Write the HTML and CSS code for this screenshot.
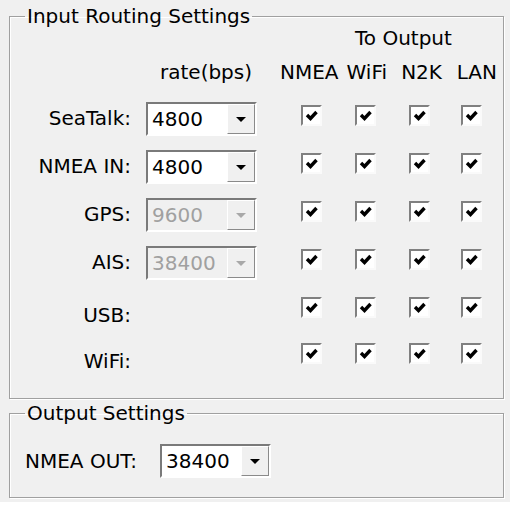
FILE: index.html
```html
<!DOCTYPE html>
<html lang="en">
<head>
    <meta charset="UTF-8">
    <title>Routing Settings</title>
    <link rel="stylesheet" href="styles.css">
</head>
<body>
    <div class="panel">
        <!-- Input routing frame -->
        <fieldset class="frame">
            <legend>Input Routing Settings</legend>
            <div class="routing">
                <div class="to-output">To Output</div>

                <div class="rate-head">rate(bps)</div>
                <div class="out-heads">
                    <span class="h-nmea">NMEA</span>
                    <span class="h-wifi">WiFi</span>
                    <span class="h-n2k">N2K</span>
                    <span>LAN</span>
                </div>

                <div class="label">SeaTalk:</div>
                <div class="combo"><span class="value">4800</span><span class="drop"><span class="arrow"></span></span></div>
                <span class="cb c1"><svg viewBox="0 0 17 17"><path d="M4 8 L7.5 11.5 L13.5 5"/></svg></span>
                <span class="cb c2"><svg viewBox="0 0 17 17"><path d="M4 8 L7.5 11.5 L13.5 5"/></svg></span>
                <span class="cb c3"><svg viewBox="0 0 17 17"><path d="M4 8 L7.5 11.5 L13.5 5"/></svg></span>
                <span class="cb c4"><svg viewBox="0 0 17 17"><path d="M4 8 L7.5 11.5 L13.5 5"/></svg></span>

                <div class="label">NMEA IN:</div>
                <div class="combo"><span class="value">4800</span><span class="drop"><span class="arrow"></span></span></div>
                <span class="cb c1"><svg viewBox="0 0 17 17"><path d="M4 8 L7.5 11.5 L13.5 5"/></svg></span>
                <span class="cb c2"><svg viewBox="0 0 17 17"><path d="M4 8 L7.5 11.5 L13.5 5"/></svg></span>
                <span class="cb c3"><svg viewBox="0 0 17 17"><path d="M4 8 L7.5 11.5 L13.5 5"/></svg></span>
                <span class="cb c4"><svg viewBox="0 0 17 17"><path d="M4 8 L7.5 11.5 L13.5 5"/></svg></span>

                <div class="label">GPS:</div>
                <div class="combo disabled"><span class="value">9600</span><span class="drop"><span class="arrow"></span></span></div>
                <span class="cb c1"><svg viewBox="0 0 17 17"><path d="M4 8 L7.5 11.5 L13.5 5"/></svg></span>
                <span class="cb c2"><svg viewBox="0 0 17 17"><path d="M4 8 L7.5 11.5 L13.5 5"/></svg></span>
                <span class="cb c3"><svg viewBox="0 0 17 17"><path d="M4 8 L7.5 11.5 L13.5 5"/></svg></span>
                <span class="cb c4"><svg viewBox="0 0 17 17"><path d="M4 8 L7.5 11.5 L13.5 5"/></svg></span>

                <div class="label">AIS:</div>
                <div class="combo disabled"><span class="value">38400</span><span class="drop"><span class="arrow"></span></span></div>
                <span class="cb c1"><svg viewBox="0 0 17 17"><path d="M4 8 L7.5 11.5 L13.5 5"/></svg></span>
                <span class="cb c2"><svg viewBox="0 0 17 17"><path d="M4 8 L7.5 11.5 L13.5 5"/></svg></span>
                <span class="cb c3"><svg viewBox="0 0 17 17"><path d="M4 8 L7.5 11.5 L13.5 5"/></svg></span>
                <span class="cb c4"><svg viewBox="0 0 17 17"><path d="M4 8 L7.5 11.5 L13.5 5"/></svg></span>

                <div class="label low">USB:</div>
                <span class="cb c1"><svg viewBox="0 0 17 17"><path d="M4 8 L7.5 11.5 L13.5 5"/></svg></span>
                <span class="cb c2"><svg viewBox="0 0 17 17"><path d="M4 8 L7.5 11.5 L13.5 5"/></svg></span>
                <span class="cb c3"><svg viewBox="0 0 17 17"><path d="M4 8 L7.5 11.5 L13.5 5"/></svg></span>
                <span class="cb c4"><svg viewBox="0 0 17 17"><path d="M4 8 L7.5 11.5 L13.5 5"/></svg></span>

                <div class="label low">WiFi:</div>
                <span class="cb c1"><svg viewBox="0 0 17 17"><path d="M4 8 L7.5 11.5 L13.5 5"/></svg></span>
                <span class="cb c2"><svg viewBox="0 0 17 17"><path d="M4 8 L7.5 11.5 L13.5 5"/></svg></span>
                <span class="cb c3"><svg viewBox="0 0 17 17"><path d="M4 8 L7.5 11.5 L13.5 5"/></svg></span>
                <span class="cb c4"><svg viewBox="0 0 17 17"><path d="M4 8 L7.5 11.5 L13.5 5"/></svg></span>
            </div>
        </fieldset>

        <!-- Output frame -->
        <fieldset class="frame output">
            <legend>Output Settings</legend>
            <div class="out-row">
                <div class="out-label">NMEA OUT:</div>
                <div class="combo"><span class="value">38400</span><span class="drop"><span class="arrow"></span></span></div>
            </div>
        </fieldset>
    </div>
</body>
</html>
```

FILE: styles.css
```css
/* Fenetre de type Windows */
body {
    margin: 0;
    background: #ffffff;
    font-family: "DejaVu Sans", Verdana, sans-serif;
    font-size: 20px;
    color: #000;
}

.panel {
    width: 510px;
    height: 502px;
    box-sizing: border-box;
    padding: 4px 0 0 9px;
    background: #f0f0f0;
}

/* Cadre grave (etched) */
.frame {
    width: 495px;
    box-sizing: border-box;
    margin: 0;
    padding: 0 0 19px 0;
    border: 1px solid #a0a0a0;
    box-shadow: 1px 1px 0 #fff, inset 1px 1px 0 #fff;
}

.frame legend {
    margin-left: 15px;
    padding: 0 2px;
    line-height: 24px;
}

.routing {
    display: grid;
    grid-template-columns: 136px 111px 27px 54px 55px 52px 52px;
    grid-template-rows: 20px 47px 48px 48px 48px 48px 48px 44px;
    align-items: center;
}

.to-output {
    grid-column: 5 / 8;
    padding-left: 17px;
    line-height: 20px;
}

.rate-head {
    grid-column: 2;
    padding-left: 14px;
}

.out-heads {
    grid-column: 3 / 8;
    display: flex;
    margin-left: 23px;
}

.out-heads span {
    display: block;
}

.h-nmea { width: 67px; }
.h-wifi { width: 55px; }
.h-n2k { width: 56px; }

.label {
    grid-column: 1;
    text-align: right;
    padding-right: 15px;
    margin-top: -2px;
}

.label.low {
    margin-top: 8px;
}

/* Liste deroulante */
.combo {
    grid-column: 2;
    display: flex;
    width: 111px;
    height: 34px;
    box-sizing: border-box;
    border: 2px solid;
    border-color: #7a7a7a #ffffff #ffffff #7a7a7a;
    background: #ffffff;
}

.combo .value {
    flex: 1;
    padding-left: 4px;
    line-height: 30px;
}

.combo .drop {
    width: 28px;
    box-sizing: border-box;
    border: 1px solid;
    border-color: #ffffff #8a8a8a #8a8a8a #ffffff;
    background: #f0f0f0;
    display: flex;
    align-items: center;
    justify-content: center;
}

.combo .arrow {
    width: 0;
    height: 0;
    border-left: 5px solid transparent;
    border-right: 5px solid transparent;
    border-top: 5px solid #000;
}

.combo.disabled {
    background: #f0f0f0;
    color: #a0a0a0;
}

.combo.disabled .arrow {
    border-top-color: #a8a8a8;
}

/* Cases a cocher */
.cb {
    justify-self: center;
    width: 21px;
    height: 21px;
    box-sizing: border-box;
    border: 2px solid;
    border-color: #808080 #fafafa #fafafa #808080;
    background: #ffffff;
    margin-bottom: 8px;
}

.cb svg {
    display: block;
    width: 17px;
    height: 17px;
    fill: none;
    stroke: #000;
    stroke-width: 3.4;
}

.c1 { grid-column: 4; }
.c2 { grid-column: 5; }
.c3 { grid-column: 6; }
.c4 { grid-column: 7; }

.output {
    margin-top: 2px;
}

.out-row {
    display: flex;
    align-items: center;
    padding: 19px 0 0 15px;
}

.out-label {
    width: 135px;
}
```
